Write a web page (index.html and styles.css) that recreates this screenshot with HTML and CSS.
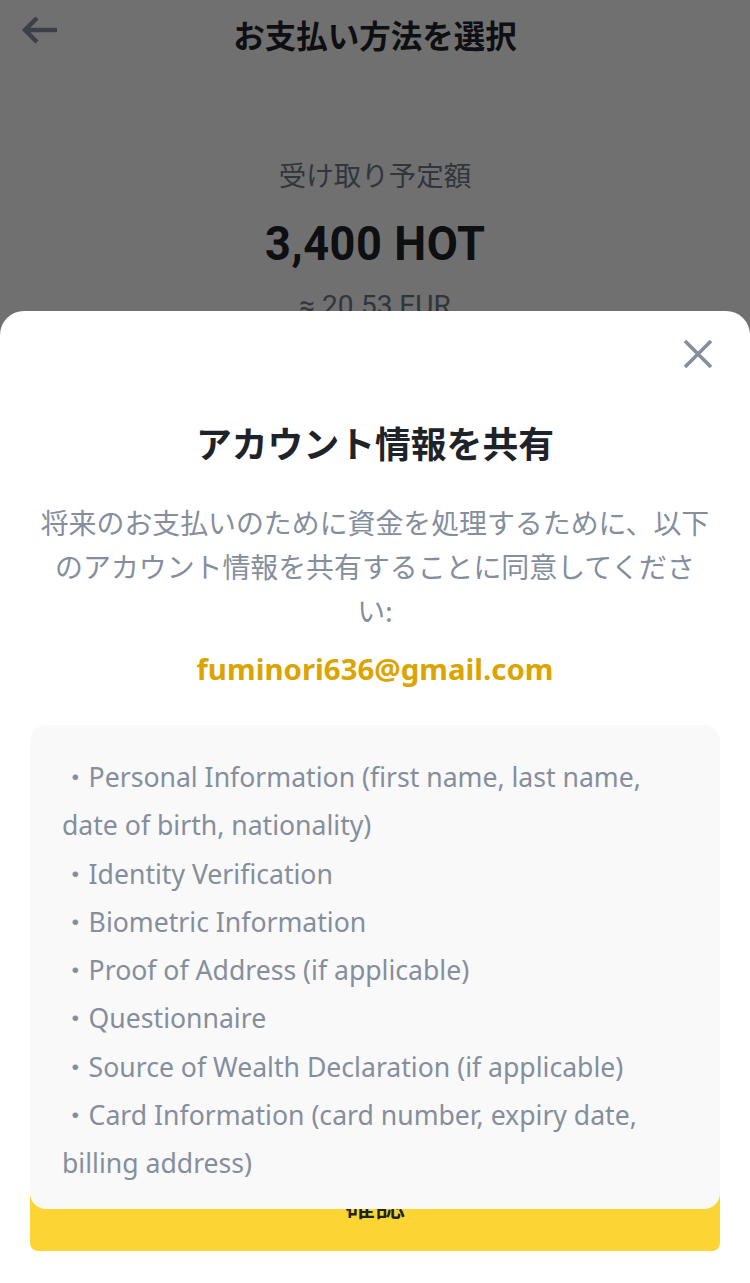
FILE: index.html
```html
<!DOCTYPE html>
<html lang="ja">
<head>
<meta charset="utf-8">
<title>お支払い方法を選択</title>
<link rel="stylesheet" href="styles.css">
</head>
<body>
<div class="page">
  <header class="topbar">
    <button class="back" aria-label="戻る">
      <svg width="38" height="30" viewBox="0 0 38 30"><path d="M36 15H5M16 3L4 15l12 12" fill="none" stroke="#8a93a0" stroke-width="4.5" stroke-linejoin="miter"/></svg>
    </button>
    <h1 class="topbar-title">お支払い方法を選択</h1>
  </header>
  <section class="summary">
    <div class="summary-label">受け取り予定額</div>
    <div class="summary-amount">3,400 HOT</div>
    <div class="summary-fiat">≈ 20.53 EUR</div>
  </section>
</div>
<div class="overlay"></div>
<div class="sheet">
  <div class="sheet-head">
    <button class="close" aria-label="閉じる">
      <svg width="32" height="32" viewBox="0 0 32 32"><path d="M3 3L29 29M29 3L3 29" fill="none" stroke="#848e9c" stroke-width="3.6"/></svg>
    </button>
  </div>
  <h2 class="sheet-title">アカウント情報を共有</h2>
  <p class="sheet-desc">将来のお支払いのために資金を処理するために、以下のアカウント情報を共有することに同意してください:</p>
  <div class="sheet-email">fuminori636@gmail.com</div>
  <div class="info-card">
    <div class="info-item">・Personal Information (first name, last name, date of birth, nationality)</div>
    <div class="info-item">・Identity Verification</div>
    <div class="info-item">・Biometric Information</div>
    <div class="info-item">・Proof of Address (if applicable)</div>
    <div class="info-item">・Questionnaire</div>
    <div class="info-item">・Source of Wealth Declaration (if applicable)</div>
    <div class="info-item">・Card Information (card number, expiry date, billing address)</div>
  </div>
  <button class="confirm">確認</button>
</div>
</body>
</html>
```
FILE: styles.css
```css
html, body {
  margin: 0;
  padding: 0;
}
body {
  width: 750px;
  height: 1283px;
  overflow: hidden;
  position: relative;
  background: #ffffff;
  font-family: "Noto Sans", "Noto Sans CJK JP", sans-serif;
  color: #1e2329;
}
button {
  border: 0;
  background: none;
  padding: 0;
  margin: 0;
  font: inherit;
  cursor: pointer;
}
.topbar {
  position: relative;
  height: 68px;
  display: flex;
  align-items: center;
  justify-content: center;
}
.back {
  position: absolute;
  left: 21px;
  top: 15px;
  width: 38px;
  height: 30px;
  display: flex;
}
.topbar-title {
  margin: 0;
  font-family: "Noto Sans CJK JP", sans-serif;
  font-size: 31.5px;
  font-weight: 700;
  line-height: 40px;
  color: #1e2329;
}
.summary {
  display: flex;
  flex-direction: column;
  align-items: center;
  padding-top: 86px;
}
.summary-label {
  font-family: "Noto Sans CJK JP", sans-serif;
  font-size: 27.5px;
  line-height: 40px;
  color: #707a8a;
}
.summary-amount {
  margin-top: 22px;
  font-family: Roboto, sans-serif;
  font-size: 48px;
  font-weight: 700;
  line-height: 56px;
  letter-spacing: 0.6px;
  color: #1e2329;
  transform: scaleX(0.94);
}
.summary-fiat {
  margin-top: 14px;
  font-family: Roboto, sans-serif;
  font-size: 28px;
  line-height: 40px;
  color: #707a8a;
}
.overlay {
  position: absolute;
  inset: 0;
  background: rgba(0, 0, 0, 0.56);
}
.sheet {
  position: absolute;
  left: 0;
  right: 0;
  top: 311px;
  bottom: 0;
  background: #ffffff;
  border-radius: 24px 24px 0 0;
  display: flex;
  flex-direction: column;
  align-items: center;
  padding: 0 30px;
}
.sheet-head {
  align-self: stretch;
  display: flex;
  justify-content: flex-end;
  padding-top: 27px;
  padding-right: 6px;
  height: 32px;
}
.close {
  width: 32px;
  height: 32px;
  display: flex;
}
.sheet-title {
  margin: 48px 0 0;
  font-family: "Noto Sans CJK JP", sans-serif;
  font-size: 35.8px;
  font-weight: 700;
  line-height: 48px;
  color: #1e2329;
}
.sheet-desc {
  margin: 34px 0 0;
  width: 671px;
  font-family: "Noto Sans CJK JP", sans-serif;
  font-size: 27.9px;
  line-height: 44px;
  text-align: center;
  color: #848e9c;
}
.sheet-email {
  margin-top: 17px;
  font-family: "Noto Sans", sans-serif;
  font-size: 29.4px;
  font-weight: 700;
  line-height: 40px;
  color: #dca400;
}
.info-card {
  position: relative;
  z-index: 1;
  align-self: stretch;
  margin-top: 36px;
  background: #f9f9fa;
  border-radius: 16px;
  padding: 28px 32px 21px;
}
.info-item {
  font-family: "Noto Sans", "Noto Sans CJK JP", sans-serif;
  font-size: 26.6px;
  line-height: 48.3px;
  color: #848e9c;
}
.confirm {
  align-self: stretch;
  margin-top: -54px;
  height: 96px;
  background: #fcd535;
  border-radius: 8px;
  font-family: "Noto Sans CJK JP", sans-serif;
  font-size: 30px;
  font-weight: 500;
  color: #1e2329;
}
```
